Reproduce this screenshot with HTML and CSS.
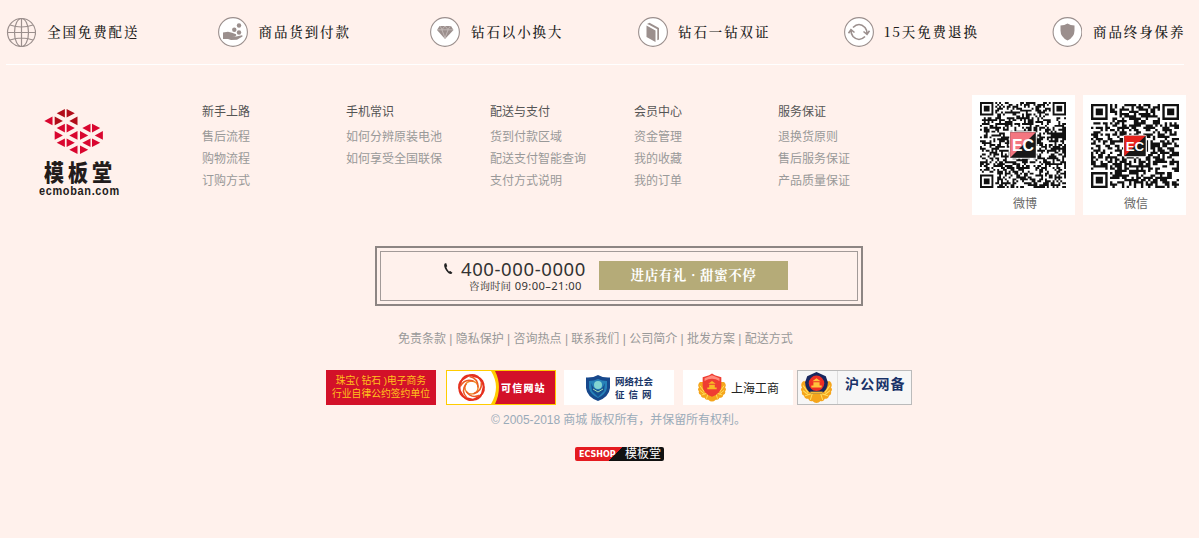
FILE: index.html
```html
<!DOCTYPE html>
<html lang="zh-CN">
<head>
<meta charset="utf-8">
<title>商城</title>
<link rel="stylesheet" href="styles.css">
</head>
<body>
<footer class="footer">
  <ul class="services">
    <li class="service"><svg class="service-icon" viewBox="0 0 30 30"><g fill="none" stroke="#9b8f8d" stroke-width="1.2"><circle cx="15.500" cy="15.500" r="14"/><ellipse cx="15.500" cy="15.500" rx="7" ry="14"/><path d="M15.500 1.500v28M1.500 15.500h28M4 8q11.500 4 23 0M4 23q11.500-4 23 0"/></g></svg><span>全国免费配送</span></li>
    <li class="service"><svg class="service-icon" viewBox="0 0 30 30"><circle class="ring" cx="15" cy="15" r="14.4"/><g fill="#9b8f8d"><circle cx="21" cy="8.500" r="2.200"/><circle cx="16.300" cy="12.700" r="2.200"/><circle cx="21" cy="15.500" r="2.200"/><path d="M5 15.500l5-.8 4 1 4 1.500q1 1.500-1 2h-3l4 .4 5-1.200q2-.2 1.500 1l-5.500 3.300-6 .2-3-.9H5z"/></g></svg><span>商品货到付款</span></li>
    <li class="service"><svg class="service-icon" viewBox="0 0 30 30"><circle class="ring" cx="15" cy="15" r="14.400"/><path d="M9.500 9h11.500l2.500 4-8.500 9-8-9z" fill="#9b8f8d"/><path d="M7 12.800h16M10 9l2 3.500L15 9l3 3.500L20.500 9M12 13l3 8 3-8" fill="none" stroke="#d8d0ce" stroke-width=".6"/></svg><span>钻石以小换大</span></li>
    <li class="service"><svg class="service-icon" viewBox="0 0 30 30"><circle class="ring" cx="15" cy="15" r="14.400"/><path d="M8.500 8.500l9 5V25l-9-5zM9 7l2.500-1.200L21 11v11.500l-1.700.7V12.300L11 7.800z" fill="#9b8f8d"/></svg><span class="tight">钻石一钻双证</span></li>
    <li class="service"><svg class="service-icon" viewBox="0 0 30 30"><circle class="ring" cx="15" cy="15" r="14.400"/><g fill="none" stroke="#9b8f8d" stroke-width="1.600"><path d="M9 10.500q6-6 12 0 2 2.500 2 6M21 19.500q-6 6-12 0-2-2.500-2-6M19.500 14.500l3.500 2.800 2.500-3.500M4.500 16.200L7 12.700l3.500 2.800"/></g></svg><span class="tight">15天免费退换</span></li>
    <li class="service"><svg class="service-icon" viewBox="0 0 30 30"><circle class="ring" cx="15.500" cy="15" r="14.400"/><path d="M15.500 6.500q3 2 7 2v5q0 6.500-7 10-7-3.500-7-10v-5q4 0 7-2z" fill="#9b8f8d"/></svg><span>商品终身保养</span></li>
  </ul>

  <div class="help">
    <div class="brand">
      <svg class="brand-mark" viewBox="0 0 60 46" id="brand-mark"></svg>
      <div class="brand-name">模板堂</div>
      <div class="brand-url">ecmoban.com</div>
    </div>
    <nav class="columns">
      <dl><dt>新手上路</dt><dd>售后流程</dd><dd>购物流程</dd><dd>订购方式</dd></dl>
      <dl><dt>手机常识</dt><dd>如何分辨原装电池</dd><dd>如何享受全国联保</dd></dl>
      <dl><dt>配送与支付</dt><dd>货到付款区域</dd><dd>配送支付智能查询</dd><dd>支付方式说明</dd></dl>
      <dl><dt>会员中心</dt><dd>资金管理</dd><dd>我的收藏</dd><dd>我的订单</dd></dl>
      <dl><dt>服务保证</dt><dd>退换货原则</dd><dd>售后服务保证</dd><dd>产品质量保证</dd></dl>
    </nav>
    <div class="codes">
      <figure class="code weibo"><svg class="qr" data-size="45" data-seed="7" viewBox="0 0 45 45"></svg><figcaption>微博</figcaption></figure>
      <figure class="code wechat"><svg class="qr" data-size="37" data-seed="23" viewBox="0 0 37 37" preserveAspectRatio="none"></svg><figcaption>微信</figcaption></figure>
    </div>
  </div>

  <div class="contact">
    <div class="contact-inner">
      <svg class="phone" viewBox="0 0 10 14"><path d="M3 1L1.200 2Q0 5 3 9.200T8.500 13L9.800 11.500 7.500 9.600 6 10.200Q3.800 8 3.200 5.500L4.200 4.500z" fill="#222"/></svg>
      <div class="contact-text"><div class="tel">400-000-0000</div><div class="hours">咨询时间 <span>09:00–21:00</span></div></div>
      <div class="promo">进店有礼 · 甜蜜不停</div>
    </div>
  </div>

  <div class="links">免责条款 | 隐私保护 | 咨询热点 | 联系我们 | 公司简介 | 批发方案 | 配送方式</div>

  <div class="badges">
    <div class="badge pact"><span>珠宝( 钻石 )电子商务</span><span>行业自律公约签约单位</span></div>
    <div class="badge trust">
      <svg viewBox="0 0 108 33" width="108" height="33"><path d="M0 0h45q11 16 0 33H0z" fill="#fff"/><path d="M44 0q10 16 0 33h4q8-17 0-33z" fill="#fc0"/><g fill="none" transform="translate(24.500 16.500)"><g stroke="#e5301f" stroke-width="1.700"><rect x="-11.500" y="-11.500" width="23" height="23" rx="8.500" transform="rotate(14)"/><rect x="-11.500" y="-11.500" width="23" height="23" rx="8.500" transform="rotate(59)"/></g><circle r="6.600" stroke="#f0902b" stroke-width="1.500"/><path id="blade" d="M-2-11Q7-9 6.500 0" stroke="#ec5a24" stroke-width="1.500"/><use href="#blade" transform="rotate(72)"/><use href="#blade" transform="rotate(144)"/><use href="#blade" transform="rotate(216)"/><use href="#blade" transform="rotate(288)"/></g></svg>
      <span>可信网站</span>
    </div>
    <div class="badge credit">
      <svg viewBox="0 0 24 26" width="24" height="26"><path d="M12 0q5 3 12 2.500V13q-1 9-12 13Q1 22 0 13V2.500Q7 3 12 0z" fill="#17488c"/><path d="M12 4q4 2 9 2v7q-1 6-9 10-8-4-9-10V6q5 0 9-2z" fill="#2681b8"/><path d="M5 8q3 7 7 7t7-7l-1 8-6 6-6-6z" fill="#164f91"/><circle cx="12" cy="10" r="4" fill="#82d4d2"/><path d="M7 14l5 3 5-3" stroke="#a1deb5" fill="none"/></svg>
      <div><span>网络社会</span><span class="wide">征信网</span></div>
    </div>
    <div class="badge commerce">
      <svg viewBox="0 0 30 30" width="28" height="29"><use href="#wreath"/><g transform="translate(2 0)"><path d="M13 0l3 2 7 2v9q0 8-10 12Q3 21 3 13V4l7-2z" fill="#ef3d32"/><path d="M5 5l8-3 8 3v3q-8-5-16 0z" fill="#ff8b7d"/><path d="M8 17h10v-2h-2v-3h-6v3H8zM9 11l4-3 4 3z" fill="#f9ba25"/></g></svg>
      <span>上海工商</span>
    </div>
    <div class="badge police">
      <svg viewBox="0 0 30 30" width="31" height="31"><g id="wreath"><path d="M2 9Q-1 12 1 15q-2 2 0 4-1 3 2 4 0 3 4 3 1 3 4 2 2 2 4 2t4-2q3 1 4-2 4 0 4-3 3-1 2-4 2-2 0-4 2-3-1-6z" fill="#f5a51c"/><path d="M2 13l5 7M2 18l5 4M4 23l6-2M9 27l2-6M28 13l-5 7M28 18l-5 4M26 23l-6-2M21 27l-2-6" stroke="#ffe060"/></g><g transform="translate(2 0)"><path d="M13 0l9 4 2 6q0 7-6 11H8q-6-4-6-11l2-6z" fill="#17265e"/><circle cx="13" cy="11" r="7.500" fill="#ee2e24"/><path d="M8 15h10v-2h-2v-3h-6v3H8zM9 9l4-3 4 3z" fill="#ffc23b"/><path d="M7 20h12" stroke="#f7bc34" stroke-width="2"/></g></svg>
      <span>沪公网备</span>
    </div>
  </div>

  <div class="copyright">© 2005-2018 商城 版权所有，并保留所有权利。</div>
  <div class="maker"><span class="maker-ec">ECSHOP</span><span class="maker-name">模板堂</span></div>
</footer>
<script src="main.js"></script>
</body>
</html>
```
FILE: styles.css
```css
* { box-sizing: border-box; }
body { margin: 0; background: #fff1ec; font: 12px "Liberation Sans", "Noto Sans CJK SC", sans-serif; color: #999; }
ul, dl, dd, figure { margin: 0; padding: 0; list-style: none; }
svg { display: block; flex: none; }
.footer { width: 1199px; height: 538px; overflow: hidden; }
.services { display: grid; grid-template-columns: 211.500px 212.500px 208px 206px 208px 134px; margin: 0 15px 0 6px; height: 65px; padding-top: 17px; border-bottom: 1px solid #fff; }
.service { display: flex; height: 30px; align-items: center; white-space: nowrap; color: #211b1a; font: 500 13.500px "Noto Serif CJK SC", "Noto Sans CJK SC", serif; letter-spacing: 1.900px; }
.service span { padding-bottom: 2px; }
.service .tight { margin-left: -1px; }
.service-icon { width: 30px; height: 30px; margin-right: 11px; }
.ring { fill: #fff; stroke: #9b8f8d; stroke-width: 1.100; }
.help { display: flex; height: 150px; padding-top: 30px; }
.brand { width: 118px; margin: 13px 84px 0 0; padding-left: 38px; color: #231c1b; white-space: nowrap; }
.brand-mark { width: 60px; height: 46px; margin-left: 6px; }
.brand-name { margin: 5px 0 0 6px; font: 900 20px/25px "Noto Sans CJK SC", sans-serif; letter-spacing: 4px; transform: scaleY(1.12); }
.brand-url { width: 100px; font: bold 13px/14px "Liberation Sans", sans-serif; letter-spacing: .8px; margin: 0 0 0 1px; transform: scaleX(.84); transform-origin: 0 0; }
.columns { display: grid; grid-template-columns: repeat(5, 144px); width: 770px; padding-top: 6px; }
.columns dt { height: 25px; line-height: 22px; color: #555; }
.columns dd { height: 22px; line-height: 22px; }
.codes { display: flex; gap: 8px; }
.code { width: 103px; height: 120px; background: #fff; color: #666; text-align: center; }
.qr { width: 86px; height: 86px; margin: 7px 0 0 8px; }
.wechat .qr { width: 88px; height: 84px; margin: 9px 0 0 8px; }
.code figcaption { line-height: 16px; margin-top: 8px; padding-left: 3px; }
.contact { width: 488px; height: 60px; margin: 31px 0 0 375px; padding: 3px; border: 2px solid #8d8583; }
.contact-inner { display: flex; height: 50px; border: 1px solid #a29a98; padding-left: 62px; }
.phone { width: 10px; height: 13px; margin-top: 10px; }
.contact-text { width: 146px; padding: 6px 0 0 8px; color: #333; white-space: nowrap; }
.tel { font: 18.500px/22px "Noto Sans", sans-serif; letter-spacing: .6px; }
.hours { font: 10.500px/11px "Noto Serif CJK SC", "Noto Sans CJK SC", sans-serif; padding-left: 8px; }
.hours span { font: 11.200px/11px "Noto Sans", sans-serif; letter-spacing: .4px; margin-left: 1px; }
.promo { width: 189px; height: 29px; margin-top: 9px; background: #b5ab78; color: #fff; text-align: center; font: 700 13.500px/27px "Noto Serif CJK SC", "Noto Sans CJK SC", serif; letter-spacing: .6px; }
.links { margin: 23px 0 0 398px; height: 20px; line-height: 20px; white-space: nowrap; }
.badges { display: flex; height: 35px; margin: 21px 0 0 326px; }
.badge { display: flex; width: 110px; height: 35px; background: #fff; align-items: center; white-space: nowrap; }
.badge span { display: block; }
.pact { flex-direction: column; justify-content: center; margin-right: 10px; padding-bottom: 1px; background: #d31129; color: #ffc21c; font-size: 9.800px; line-height: 13px; }
.trust { position: relative; margin-right: 8px; border: 1px solid #fc0; background: #d31129; color: #fff; }
.trust span { position: absolute; left: 54px; font: 900 10px "Noto Sans CJK SC", sans-serif; letter-spacing: 1.200px; }
.credit { margin-right: 9px; padding-left: 22px; gap: 5px; color: #1a3769; font: 700 9.500px/13px "Noto Sans CJK SC", sans-serif; }
.credit .wide { letter-spacing: 4px; }
.commerce { margin-right: 4px; padding-left: 15px; gap: 5px; color: #222; }
.police { width: 115px; padding-left: 3px; gap: 13px; border: 1px solid #bbb; background: linear-gradient(90deg, #f6f6f6 39px, #ddd 39px, #ddd 40px, #f6f6f6 40px); color: #193268; font: bold 14px/20px "Noto Sans CJK SC", sans-serif; }
.police span { margin-top: -9px; letter-spacing: 1.200px; }
.copyright { margin: 5px 0 0 491px; height: 20px; line-height: 20px; color: #9aabb9; white-space: nowrap; letter-spacing: -.05px; }
.maker { display: flex; width: 89px; height: 14px; margin: 17px 0 0 575px; border-radius: 2px; overflow: hidden; background: linear-gradient(135deg, #e51b20 0 46%, #111 46%); color: #fff; white-space: nowrap; }
.maker-ec { width: 50px; padding-left: 4px; font: bold 8px/15px "DejaVu Sans", sans-serif; }
.maker-name { font-size: 12px; line-height: 15px; }
```
FILE: main.js
```js
const NS = 'http://www.w3.org/2000/svg';
function add(svg, name, attrs, text) {
  const el = document.createElementNS(NS, name);
  for (const key in attrs) el.setAttribute(key, attrs[key]);
  if (text) el.textContent = text;
  svg.appendChild(el);
}

// Triangles of the bird logo: left, top, direction (l/r), dark head or not
const mark = document.getElementById('brand-mark');
const W = 8.2, H = 8.6;
[
  [0.3, 8.6, 'l'],
  [12.7, 1, 'l', 1], [22.6, 1, 'r', 1], [10.7, 8.6, 'r', 1], [25.3, 8.6, 'l', 1],
  [12.7, 15.8, 'l'], [22.6, 15.8, 'r'], [38.3, 15.8, 'l'], [48, 15.8, 'r'],
  [10.7, 23.1, 'r'], [25.3, 23.1, 'l'], [36, 23.1, 'r'], [50.7, 23.1, 'l'],
  [12.7, 30.4, 'l'], [22.6, 30.4, 'r'], [38.3, 30.4, 'l'], [48, 30.4, 'r'],
  [25.3, 37.4, 'l'], [36, 37.4, 'r']
].forEach(([x, y, dir, dark]) => {
  const d = dir === 'l' ? `M${x} ${y + H / 2}l${W} ${-H / 2}v${H}z` : `M${x + W} ${y + H / 2}l${-W} ${-H / 2}v${H}z`;
  add(mark, 'path', { d, fill: dark ? '#b10d19' : '#d9062f' });
});

// Code patterns
document.querySelectorAll('.qr').forEach(svg => {
  const n = +svg.dataset.size;
  let seed = +svg.dataset.seed;
  const rnd = () => (seed = (seed * 16807) % 2147483647) / 2147483647;
  for (let i = 0; i < 9; i++) rnd();
  let d = '';
  for (let y = 0; y < n; y++) for (let x = 0; x < n; x++) {
    const on = rnd() < 0.54;
    const corner = (x < 8 && y < 8) || (x > n - 9 && y < 8) || (x < 8 && y > n - 9);
    if (on && !corner) d += `M${x} ${y}h1v1h-1z`;
  }
  const ring = (x, y, s) => { d += `M${x} ${y}h${s}v${s}h-${s}zM${x + 1} ${y + 1}v${s - 2}h${s - 2}v-${s - 2}z`; };
  [[0, 0], [n - 7, 0], [0, n - 7]].forEach(([x, y]) => { ring(x, y, 7); d += `M${x + 2} ${y + 2}h3v3h-3z`; });
  add(svg, 'path', { d, fill: '#111' });
  const big = n === 45, s = big ? 13.4 : 9, o = (n - s) / 2;
  add(svg, 'rect', { x: o - .5, y: o - .5, width: s + 1, height: s + 1, rx: 1, fill: '#fff' });
  add(svg, 'rect', { x: o, y: o, width: s, height: s, fill: '#181818' });
  add(svg, 'path', { d: `M${o} ${o}h${s}L${o} ${o + s}z`, fill: big ? '#f47680' : '#e5221b' });
  add(svg, 'text', { x: n / 2, y: n / 2 + s * .24, 'text-anchor': 'middle', 'font-size': s * .62, 'font-weight': 'bold', fill: '#fff' }, 'EC');
});
```
